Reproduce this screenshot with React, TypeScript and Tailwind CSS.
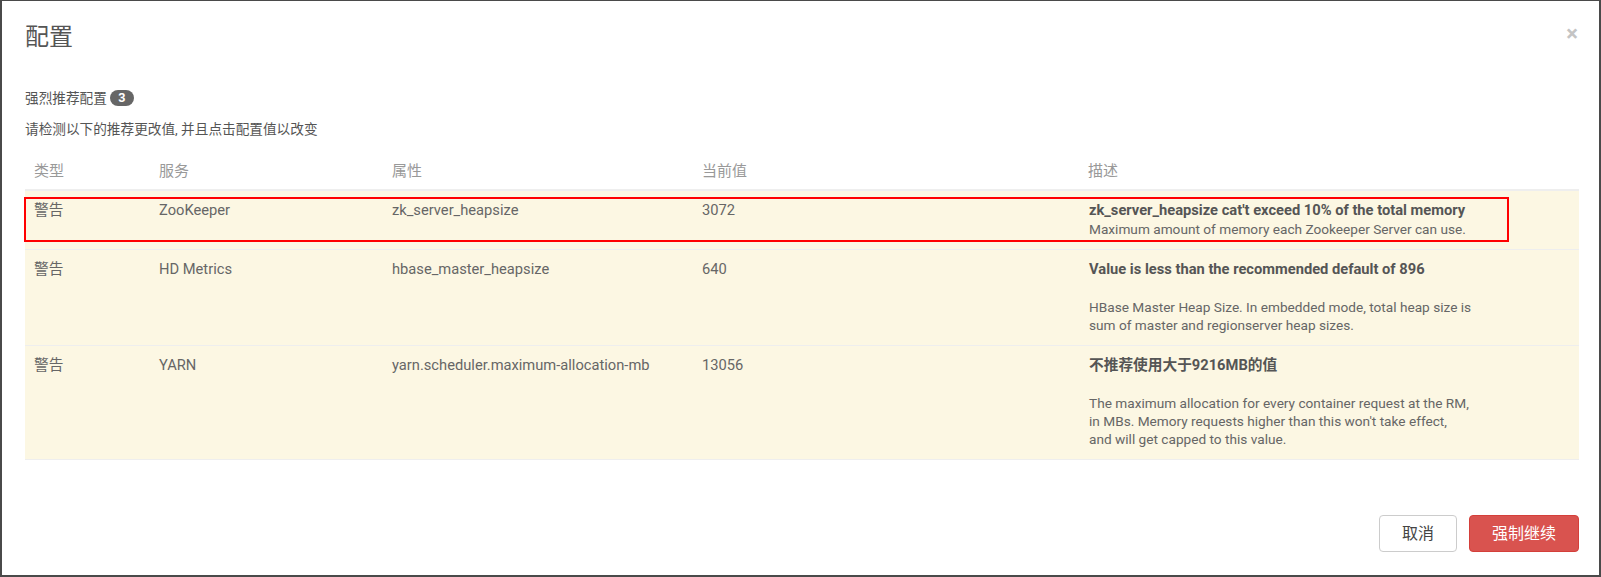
import React from 'react';

type Row = {
  type: string;
  service: string;
  property: string;
  value: string;
  title: string;
  lines: string[];
  gap?: boolean;
  flagged?: boolean;
};

const rows: Row[] = [
  {
    type: '警告',
    service: 'ZooKeeper',
    property: 'zk_server_heapsize',
    value: '3072',
    title: "zk_server_heapsize cat't exceed 10% of the total memory",
    lines: ['Maximum amount of memory each Zookeeper Server can use.'],
    flagged: true,
  },
  {
    type: '警告',
    service: 'HD Metrics',
    property: 'hbase_master_heapsize',
    value: '640',
    title: 'Value is less than the recommended default of 896',
    lines: [
      'HBase Master Heap Size. In embedded mode, total heap size is',
      'sum of master and regionserver heap sizes.',
    ],
    gap: true,
  },
  {
    type: '警告',
    service: 'YARN',
    property: 'yarn.scheduler.maximum-allocation-mb',
    value: '13056',
    title: '不推荐使用大于9216MB的值',
    lines: [
      'The maximum allocation for every container request at the RM,',
      "in MBs. Memory requests higher than this won't take effect,",
      'and will get capped to this value.',
    ],
    gap: true,
  },
];

const cols = 'grid grid-cols-[125px_233px_310px_386px_1fr]';

const App: React.FC = () => {
  return (
    <div className="w-full h-[577px] bg-[#4a4a4a] pt-[1px] pl-[2px] pr-[2px] pb-[2px] font-['Roboto','Noto_Sans_CJK_SC',sans-serif]">
      <div className="relative h-full bg-white flex flex-col pl-[23px] pr-[20px] pt-[21px] pb-[23px]">
        {/* Header */}
        <h1 className="text-[24px] leading-[30px] text-[#555] font-normal">配置</h1>
        <button className="absolute right-[21px] top-[22px] text-[22px] leading-[22px] font-bold text-[#c4c4c4]">
          ×
        </button>

        {/* Intro */}
        <div className="mt-[36px] flex items-center text-[13.65px] leading-[20px] text-[#555]">
          <span>强烈推荐配置</span>
          <span className="ml-[3px] inline-flex items-center justify-center h-[16px] min-w-[24px] px-[6px] rounded-full bg-[#666] text-white text-[12.6px] font-bold leading-none">
            3
          </span>
        </div>
        <p className="mt-[11px] text-[13.65px] leading-[20px] text-[#555]">
          请检测以下的推荐更改值, 并且点击配置值以改变
        </p>

        {/* Table */}
        <div className="mt-[12px] w-full text-[14.7px] text-[#666]">
          <div className={`${cols} border-b-2 border-[#eee] pt-[10px] pb-[8px] leading-[20px] text-[15px] text-[#999]`}>
            <div className="pl-[9px]">类型</div>
            <div className="pl-[9px]">服务</div>
            <div className="pl-[9px]">属性</div>
            <div className="pl-[9px]">当前值</div>
            <div className="pl-[9px]">描述</div>
          </div>
          {rows.map((r, i) => (
            <div
              key={i}
              className={`${cols} relative bg-[#fcf7e3] border-b border-[#eee] pt-[9px] pb-[11px] leading-[20px]`}
            >
              <div className="pl-[9px]">{r.type}</div>
              <div className="pl-[9px]">{r.service}</div>
              <div className="pl-[9px]">{r.property}</div>
              <div className="pl-[9px]">{r.value}</div>
              <div className="pl-[10px]">
                <div className="font-bold text-[#555] whitespace-nowrap">{r.title}</div>
                {r.gap && <div className="h-[19px]" />}
                {r.lines.map((l, j) => (
                  <div key={j} className="whitespace-nowrap text-[13.65px] leading-[18px]">
                    {l}
                  </div>
                ))}
              </div>
              {r.flagged && (
                <div className="absolute left-[-1px] top-[6px] w-[1485px] h-[45px] border-2 border-[#f00] pointer-events-none" />
              )}
            </div>
          ))}
        </div>

        {/* Footer */}
        <div className="mt-auto flex justify-end gap-[12px]">
          <button className="w-[78px] h-[37px] rounded-[4px] border border-[#ccc] bg-white text-[16px] text-[#444]">
            取消
          </button>
          <button className="w-[110px] h-[37px] rounded-[4px] bg-[#d9534f] border border-[#d43f3a] text-[16px] text-white">
            强制继续
          </button>
        </div>
      </div>
    </div>
  );
};

export default App;
